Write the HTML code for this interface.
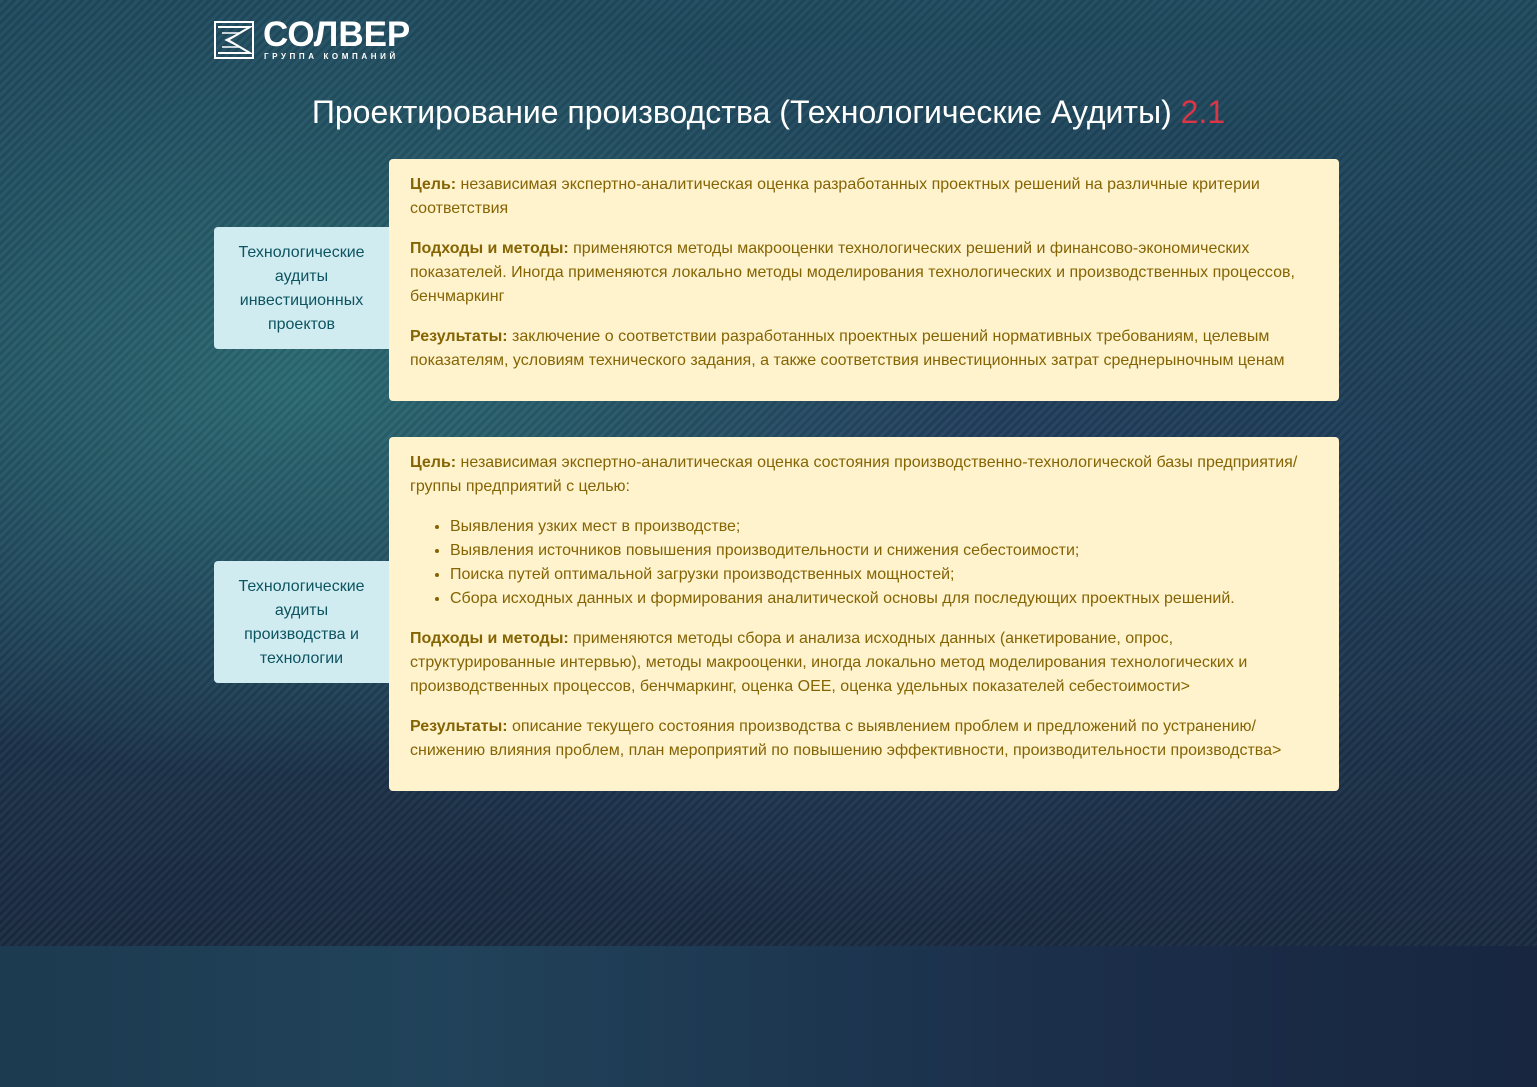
<!DOCTYPE html>
<html><head><meta charset="utf-8"><style>
*{box-sizing:border-box;margin:0;padding:0}
body{width:1537px;height:1087px;overflow:hidden;font-family:"Liberation Sans",sans-serif;position:relative;
background:radial-gradient(ellipse at 20% 35%,#2b6a72 0%,rgba(40,90,110,0) 40%),radial-gradient(ellipse at 55% 50%,#243d5e 0%,rgba(0,0,0,0) 50%),linear-gradient(180deg,#1f4a5e 0%,#1e3b55 50%,#1a2a40 86%,#1d3550 100%);}
.stripes{position:absolute;inset:0;background:repeating-linear-gradient(135deg,rgba(255,255,255,0.035) 0 3px,rgba(0,0,0,0.06) 3px 6px);}
.bottom{position:absolute;left:0;top:946px;width:1537px;height:141px;background:linear-gradient(90deg,#1c3a50,#21435a 28%,#1b2e4a 70%,#182640);}
.logo{position:absolute;left:214px;top:19px;color:#fff}
.logo .box{position:absolute;left:0;top:2px;width:40px;height:38px;border:2px solid #fff}
.logo .name{position:absolute;left:49px;top:-4px;font-size:35px;font-weight:bold;white-space:nowrap}
.logo .sub{position:absolute;left:50px;top:33px;font-size:8px;font-weight:bold;letter-spacing:3.6px;white-space:nowrap}
h1{position:absolute;left:0;width:1537px;top:94px;text-align:center;font-weight:normal;font-size:32px;color:#fff}
h1 span{color:#dc3545}
.info{position:absolute;left:214px;width:175px;background:#d1ecf1;color:#0c5460;border-radius:4px 0 0 4px;text-align:center;font-size:16px;line-height:24px;padding:14px 10px}
.warn{position:absolute;left:389px;width:950px;background:#fff3cd;color:#856404;border-radius:4px;font-size:16px;line-height:24px;padding:14px 21px}
.warn p{margin-bottom:16px}
.warn ul{margin:0 0 16px 40px}
</style></head><body>
<div class="stripes"></div><div class="bottom"></div>
<div class="logo"><div class="box"><svg width="36" height="34" viewBox="0 0 36 34"><path d="M2 4 L34 4 L12 17 L34 30 L2 30" fill="none" stroke="#fff" stroke-width="2"/><path d="M6 10 L24 10 L10 17 L24 24 L6 24" fill="none" stroke="#fff" stroke-width="1.5"/></svg></div><div class="name">СОЛВЕР</div><div class="sub">ГРУППА КОМПАНИЙ</div></div>
<h1>Проектирование производства (Технологические Аудиты) <span>2.1</span></h1>
<div class="info" style="top:227px;height:122px">Технологические аудиты инвестиционных проектов</div>
<div class="warn" style="top:159px;height:242px">
<p><b>Цель:</b> независимая экспертно-аналитическая оценка разработанных проектных решений на различные критерии соответствия</p>
<p><b>Подходы и методы:</b> применяются методы макрооценки технологических решений и финансово-экономических показателей. Иногда применяются локально методы моделирования технологических и производственных процессов, бенчмаркинг</p>
<p><b>Результаты:</b> заключение о соответствии разработанных проектных решений нормативных требованиям, целевым показателям, условиям технического задания, а также соответствия инвестиционных затрат среднерыночным ценам</p>
</div>
<div class="info" style="top:561px;height:122px">Технологические аудиты производства и технологии</div>
<div class="warn" style="top:437px;height:354px">
<p><b>Цель:</b> независимая экспертно-аналитическая оценка состояния производственно-технологической базы предприятия/группы предприятий с целью:</p>
<ul><li>Выявления узких мест в производстве;</li><li>Выявления источников повышения производительности и снижения себестоимости;</li><li>Поиска путей оптимальной загрузки производственных мощностей;</li><li>Сбора исходных данных и формирования аналитической основы для последующих проектных решений.</li></ul>
<p><b>Подходы и методы:</b> применяются методы сбора и анализа исходных данных (анкетирование, опрос, структурированные интервью), методы макрооценки, иногда локально метод моделирования технологических и производственных процессов, бенчмаркинг, оценка OEE, оценка удельных показателей себестоимости&gt;</p>
<p><b>Результаты:</b> описание текущего состояния производства с выявлением проблем и предложений по устранению/снижению влияния проблем, план мероприятий по повышению эффективности, производительности производства&gt;</p>
</div>
</body></html>
